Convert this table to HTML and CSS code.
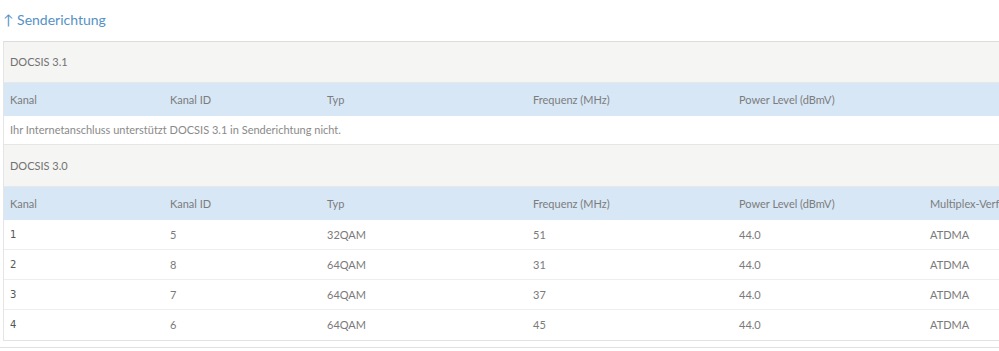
FILE: index.html
```html
<!DOCTYPE html>
<html lang="de">
<head>
<meta charset="utf-8">
<link rel="stylesheet" href="styles.css">
</head>
<body>
<div class="page">
  <h2 class="title">↑ Senderichtung</h2>
  <div class="box">
    <div class="section">DOCSIS 3.1</div>
    <div class="row head">
      <span>Kanal</span><span>Kanal ID</span><span>Typ</span><span>Frequenz (MHz)</span><span>Power Level (dBmV)</span><span></span>
    </div>
    <div class="msg">Ihr Internetanschluss unterstützt DOCSIS 3.1 in Senderichtung nicht.</div>
    <div class="section">DOCSIS 3.0</div>
    <div class="row head">
      <span>Kanal</span><span>Kanal ID</span><span>Typ</span><span>Frequenz (MHz)</span><span>Power Level (dBmV)</span><span>Multiplex-Verfahren</span>
    </div>
    <div class="row data"><span class="num">1</span><span>5</span><span>32QAM</span><span>51</span><span>44.0</span><span>ATDMA</span></div>
    <div class="row data"><span class="num">2</span><span>8</span><span>64QAM</span><span>31</span><span>44.0</span><span>ATDMA</span></div>
    <div class="row data"><span class="num">3</span><span>7</span><span>64QAM</span><span>37</span><span>44.0</span><span>ATDMA</span></div>
    <div class="row data last"><span class="num">4</span><span>6</span><span>64QAM</span><span>45</span><span>44.0</span><span>ATDMA</span></div>
  </div>
  <div class="rule"></div>
</div>
</body>
</html>
```
FILE: styles.css
```css
html, body {
  margin: 0;
  padding: 0;
  background: #ffffff;
  overflow: hidden;
}
.page {
  width: 999px;
  height: 351px;
  padding: 0 0 0 3px;
  box-sizing: border-box;
  font-family: "Source Sans Pro", Lato, "Noto Sans", sans-serif;
  font-size: 11px;
  color: #7a7a7a;
}
.title {
  margin: 0;
  padding-top: 10px;
  height: 41px;
  box-sizing: border-box;
  font-weight: normal;
  font-size: 14px;
  line-height: 20px;
  color: #5592c6;
}
.box {
  width: 1010px;
  border-top: 1px solid #dcdcdc;
  border-left: 1px solid #e4e4e4;
  border-bottom: 1px solid #e2e2e2;
}
.section {
  height: 41px;
  line-height: 40px;
  padding-left: 6px;
  box-sizing: border-box;
  background: #f5f5f3;
  color: #727272;
  border-bottom: 1px solid #e8e8e8;
}
.section + .row {
  height: 33px;
  line-height: 33px;
}
.msg + .section {
  height: 42px;
  line-height: 41px;
}
.row {
  display: grid;
  grid-template-columns: 160px 157px 206px 206px 191px 90px;
  padding-left: 6px;
  white-space: nowrap;
  overflow: hidden;
}
.head {
  height: 32px;
  line-height: 32px;
  background: #d7e7f6;
  color: #7c7c7c;
}
.msg {
  height: 29px;
  line-height: 28px;
  padding-left: 6px;
  box-sizing: border-box;
  border-bottom: 1px solid #e6e6e6;
  color: #8a8a8a;
}
.data {
  height: 30px;
  line-height: 30px;
  border-bottom: 1px solid #eeeeee;
  box-sizing: border-box;
}
.data.last {
  border-bottom: none;
}
.num {
  font-family: "DejaVu Sans", sans-serif;
  font-size: 10px;
  color: #555;
}
.rule {
  margin-top: 6px;
  margin-left: -3px;
  height: 1px;
  background: #e0e0e0;
}
```
